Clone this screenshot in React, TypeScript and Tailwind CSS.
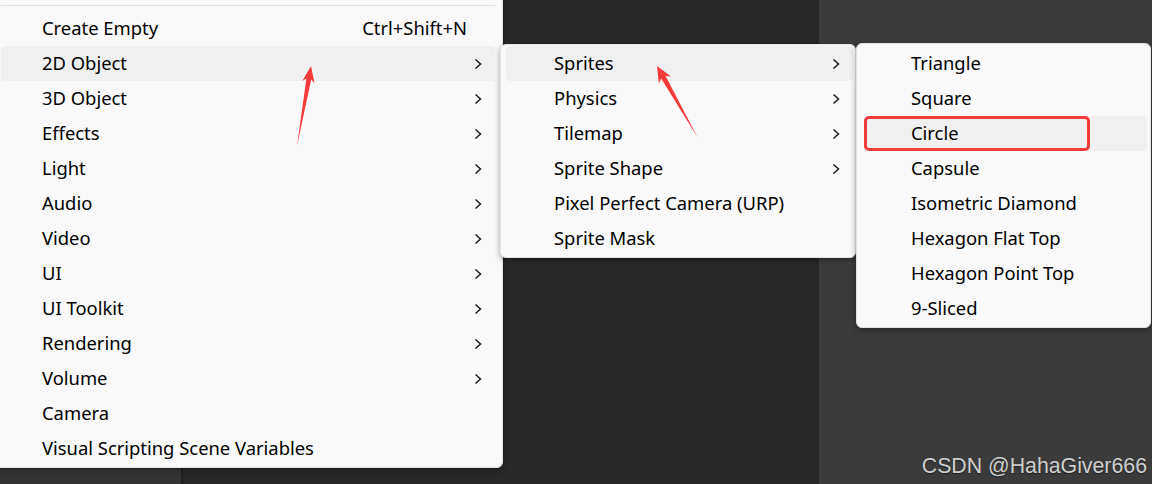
type Item = { label: string; sub?: boolean; shortcut?: string; active?: boolean; boxed?: boolean };

const mainItems: Item[] = [
  { label: "Create Empty", shortcut: "Ctrl+Shift+N" },
  { label: "2D Object", sub: true, active: true },
  { label: "3D Object", sub: true },
  { label: "Effects", sub: true },
  { label: "Light", sub: true },
  { label: "Audio", sub: true },
  { label: "Video", sub: true },
  { label: "UI", sub: true },
  { label: "UI Toolkit", sub: true },
  { label: "Rendering", sub: true },
  { label: "Volume", sub: true },
  { label: "Camera" },
  { label: "Visual Scripting Scene Variables" },
];

const objectItems: Item[] = [
  { label: "Sprites", sub: true, active: true },
  { label: "Physics", sub: true },
  { label: "Tilemap", sub: true },
  { label: "Sprite Shape", sub: true },
  { label: "Pixel Perfect Camera (URP)" },
  { label: "Sprite Mask" },
];

const spriteItems: Item[] = [
  { label: "Triangle" },
  { label: "Square" },
  { label: "Circle", active: true, boxed: true },
  { label: "Capsule" },
  { label: "Isometric Diamond" },
  { label: "Hexagon Flat Top" },
  { label: "Hexagon Point Top" },
  { label: "9-Sliced" },
];

const Chevron = () => (
  <svg width="8" height="12" viewBox="0 0 8 12" className="shrink-0">
    <polyline points="1.5,1.5 6.5,6 1.5,10.5" fill="none" stroke="#1a1a1a" strokeWidth="1.5" />
  </svg>
);

const MenuRow = ({ item, pad }: { item: Item; pad: string }) => (
  <div
    className={`relative flex h-[35px] items-center rounded-[4px] pr-[13px] ${pad} ${
      item.active ? "bg-[#f0f0f0]" : ""
    }`}
  >
    <span className="-mt-[2px] flex-1">{item.label}</span>
    {item.shortcut && <span className="-mt-[2px] pr-[15px]">{item.shortcut}</span>}
    {item.sub && <Chevron />}
    {item.boxed && (
      <div className="absolute -left-px top-0 h-[35px] w-[226px] rounded-[5px] border-[3px] border-[#f53b3b]" />
    )}
  </div>
);

const Arrows = () => (
  <svg className="pointer-events-none absolute left-0 top-0" width="1152" height="484">
    <polygon
      fill="#f63a3a"
      points="311,66 314.5,83 311.2,79.4 297,146 306.4,78.6 302.3,81"
    />
    <polygon
      fill="#f63a3a"
      points="657,66 671,76.4 665.6,76.1 697.6,137.5 661.2,78.6 658.8,83.4"
    />
  </svg>
);

export default function App() {
  return (
    <div
      className="relative flex h-[484px] w-[1152px] overflow-hidden bg-[#282828] text-[18.4px] text-black"
      style={{ fontFamily: '"Noto Sans", "Open Sans", sans-serif' }}
    >
      <div className="h-full w-[183px] border-r-2 border-[#1e1e1e] bg-[#333333]" />
      <div className="h-full flex-1 bg-[#282828]" />
      <div className="h-full w-[333px] bg-[#3b3b3b]" />

      {/* hierarchy create menu */}
      <div className="absolute left-[-6px] top-[-8px] w-[509px] rounded-[6px] border border-[#e2e2e2] bg-[#f9f9f9] pb-px pl-[6px] pr-[7px] shadow-[0_2px_6px_rgba(0,0,0,0.35)]">
        <div className="mt-[12px] h-px bg-[#e0e0e0]" />
        <div className="mt-[5px]">
          {mainItems.map((item) => (
            <MenuRow key={item.label} item={item} pad="pl-[41px]" />
          ))}
        </div>
      </div>

      {/* 2D Object submenu */}
      <div className="absolute left-[500px] top-[44px] w-[356px] rounded-[6px] border border-[#e2e2e2] bg-[#f9f9f9] pb-px pl-[5px] pr-[2px] pt-[1px] shadow-[0_2px_6px_rgba(0,0,0,0.35)]">
        {objectItems.map((item) => (
          <MenuRow key={item.label} item={item} pad="pl-[48px]" />
        ))}
      </div>

      {/* Sprites submenu */}
      <div className="absolute left-[856px] top-[43px] w-[295px] rounded-[6px] border border-[#e2e2e2] bg-[#f9f9f9] pb-px pl-[8px] pr-[3px] pt-[2px] shadow-[0_2px_6px_rgba(0,0,0,0.35)]">
        {spriteItems.map((item) => (
          <MenuRow key={item.label} item={item} pad="pl-[46px]" />
        ))}
      </div>

      <Arrows />

      <div
        className="absolute bottom-[7px] right-[5px] text-[21.3px] leading-none text-[#cfcfcf] [text-shadow:0_1px_1px_rgba(0,0,0,0.5)]"
        style={{ fontFamily: '"Liberation Sans", Arial, sans-serif' }}
      >
        CSDN @HahaGiver666
      </div>
    </div>
  );
}
